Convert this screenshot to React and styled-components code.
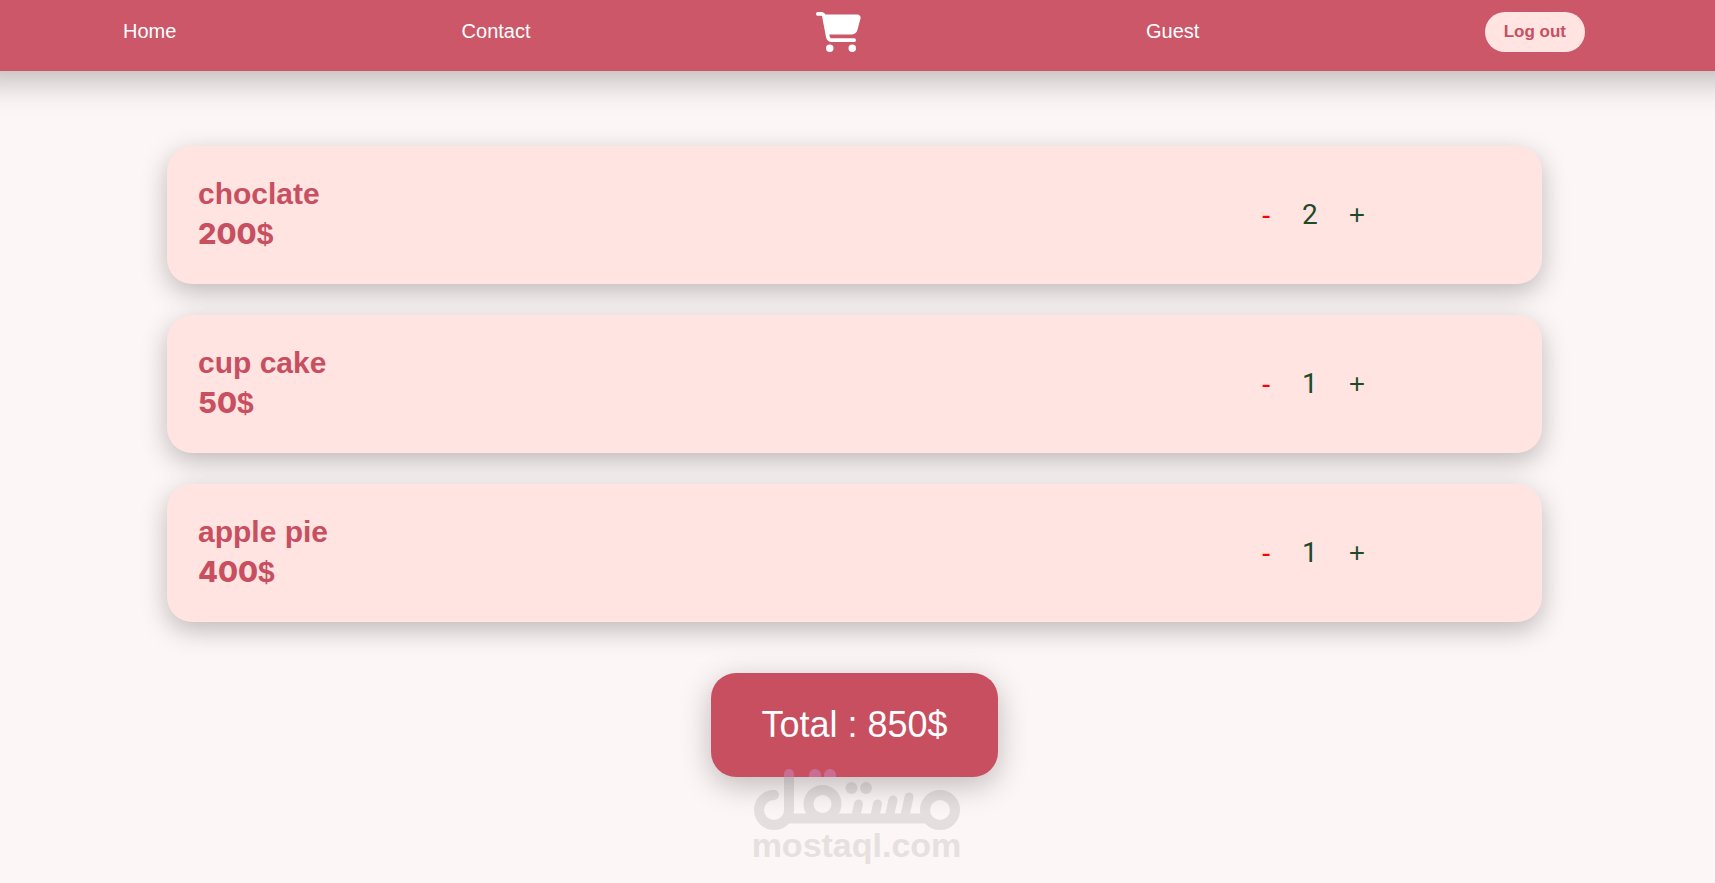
import React, { useState } from "react";
import styled, { createGlobalStyle } from "styled-components";
import { FaCartShopping } from "react-icons/fa6";

const GlobalStyle = createGlobalStyle`
	* {
		box-sizing: border-box;
	}

	body {
		margin: 0;
		min-height: 100vh;
		background: #fdf6f6;
		font-family: "Liberation Sans", Arial, sans-serif;
	}

	button {
		border: none;
		background: none;
		padding: 0;
		cursor: pointer;
	}
`;

// Styled Components
const Header = styled.header`
	background: #cb5769;
	box-shadow: 0 -20px 30px 30px rgba(0, 0, 0, 0.25);
	padding: 12px 130px 19px 123px;
`;

const Nav = styled.nav`
	display: flex;
	justify-content: space-between;
	align-items: center;
	height: 40px;
`;

const NavLink = styled.a`
	display: flex;
	color: white;
	font-size: 20px;
	line-height: 24px;
	padding-bottom: 2px;
	text-decoration: none;
`;

const CartLink = styled.a`
	display: flex;
	color: white;

	svg {
		width: 45px;
		height: 40px;
	}
`;

const LogoutButton = styled.button`
	height: 40px;
	padding: 0 19px;
	border-radius: 20px;
	background: #ffe4e1;
	color: #c84f60;
	font: bold 17px "Liberation Sans", Arial, sans-serif;
`;

const CartPage = styled.main`
	display: flex;
	flex-direction: column;
	align-items: center;
	padding: 75px 173px 20px 167px;
`;

const CartList = styled.ul`
	display: flex;
	flex-direction: column;
	gap: 31px;
	width: 100%;
	margin: 0;
	padding: 0;
	list-style: none;
`;

const CartItem = styled.li`
	display: flex;
	justify-content: space-between;
	align-items: center;
	padding: 28px 177px 31px 31px;
	border-radius: 25px;
	background: #ffe4e1;
	box-shadow: 0 8px 26px rgba(0, 0, 0, 0.25);
`;

const ItemName = styled.h2`
	margin: 0;
	color: #c84f60;
	font-size: 30px;
	line-height: 40px;
`;

const ItemPrice = styled.p`
	margin: 0;
	color: #c84f60;
	font-size: 30px;
	font-weight: bold;
	line-height: 39px;

	span {
		font-family: Inter, sans-serif;
		font-size: 29px;
		font-weight: 800;
	}
`;

const Quantity = styled.div`
	display: flex;
	align-items: center;
	gap: 31px;
	padding-top: 2px;
	color: #1d4a28;
	font-size: 28px;
	line-height: 32px;
`;

const Count = styled.span`
	font-family: Roboto, sans-serif;
`;

const StepButton = styled.button`
	color: ${(props) => (props.$minus ? "red" : "#1d4a28")};
	font: 28px/32px "Liberation Sans", Arial, sans-serif;
`;

const Total = styled.p`
	margin: 51px 0 0;
	padding: 32px 50px;
	border-radius: 25px;
	background: #c84f60;
	box-shadow: 0 8px 30px rgba(0, 0, 0, 0.25);
	color: white;
	font-size: 36px;
	line-height: 40px;
`;

// lies over the bottom edge of the total box
const Watermark = styled.div`
	position: relative;
	display: flex;
	flex-direction: column;
	align-items: center;
	margin-top: -10px;
	margin-left: 4px;
	color: #e6e0e0;
	font-size: 34px;
	font-weight: bold;
	line-height: 28px;

	svg {
		display: block;
		width: 208px;
		height: 64px;
	}
`;

const WatermarkLogo = () => (
	<svg viewBox="0 0 208 64" aria-hidden="true">
		<g opacity="0.09">
			<g stroke="black" strokeWidth="10" fill="none">
				<path d="M21 28A15 15 0 1 0 36 43V10" />
				<path d="M32 51.5H175" />
				<circle cx="69.5" cy="37" r="14" />
				<circle cx="187" cy="43" r="15" />
				<path
					d="M105.5 37L102.5 51M124.5 37L121.5 51M140 33L136 51M156 30L151.5 51"
					strokeWidth="9"
					strokeLinecap="round"
				/>
			</g>
			<circle cx="21" cy="28" r="5" />
			<circle cx="98.5" cy="21" r="6" />
			<circle cx="113" cy="21" r="6" />
		</g>
		<g fill="#cb6d93">
			<path d="M31 10V7A5 5 0 0 1 41 7V10Z" />
			<path d="M56 10V8A6 6 0 0 1 68 8V10Z" />
			<path d="M71 10V8A6 6 0 0 1 83 8V10Z" />
		</g>
	</svg>
);

const startItems = [
	{ id: 1, name: "choclate", price: 200, count: 2 },
	{ id: 2, name: "cup cake", price: 50, count: 1 },
	{ id: 3, name: "apple pie", price: 400, count: 1 },
];

export default function App() {
	const [items, setItems] = useState(startItems);

	const changeCount = (id, step) => {
		setItems(
			items.map((item) =>
				item.id === id
					? { ...item, count: Math.max(0, item.count + step) }
					: item
			)
		);
	};

	const total = items.reduce((sum, item) => sum + item.price * item.count, 0);

	return (
		<>
			<GlobalStyle />
			<Header>
				<Nav>
					<NavLink href="#home">Home</NavLink>
					<NavLink href="#contact">Contact</NavLink>
					<CartLink href="#cart" aria-label="Cart">
						<FaCartShopping />
					</CartLink>
					<NavLink href="#guest">Guest</NavLink>
					<LogoutButton type="button">Log out</LogoutButton>
				</Nav>
			</Header>
			<CartPage>
				<CartList>
					{items.map((item) => (
						<CartItem key={item.id}>
							<div>
								<ItemName>{item.name}</ItemName>
								<ItemPrice>
									<span>{item.price}</span>$
								</ItemPrice>
							</div>
							<Quantity>
								<StepButton
									type="button"
									$minus
									aria-label={`Remove one ${item.name}`}
									onClick={() => changeCount(item.id, -1)}
								>
									-
								</StepButton>
								<Count>{item.count}</Count>
								<StepButton
									type="button"
									aria-label={`Add one ${item.name}`}
									onClick={() => changeCount(item.id, 1)}
								>
									+
								</StepButton>
							</Quantity>
						</CartItem>
					))}
				</CartList>
				<Total>Total : {total}$</Total>
				<Watermark>
					<WatermarkLogo />
					mostaql.com
				</Watermark>
			</CartPage>
		</>
	);
}
